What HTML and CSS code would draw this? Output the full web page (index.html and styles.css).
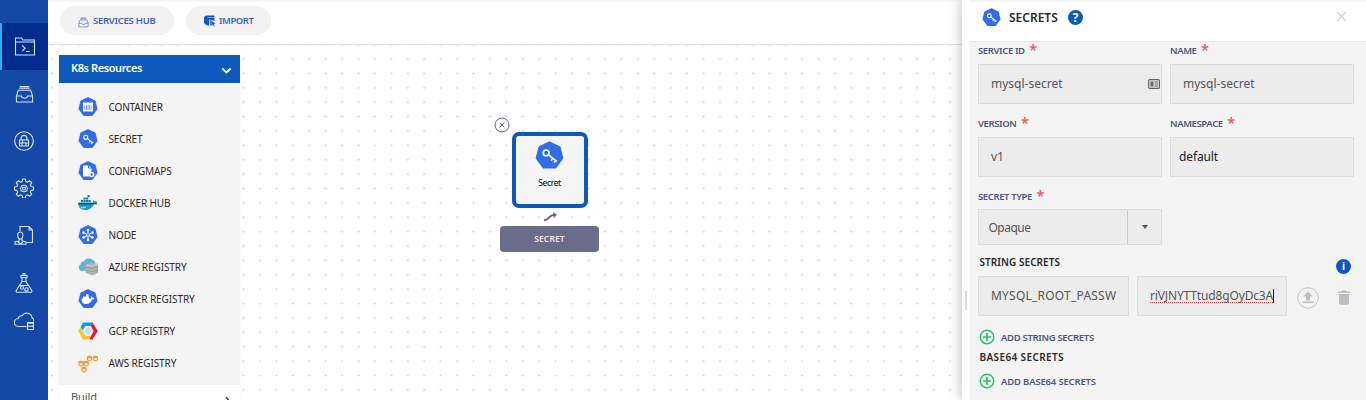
FILE: index.html
```html
<!DOCTYPE html>
<html lang="en">
<head>
<meta charset="utf-8">
<title>Secrets</title>
<link rel="stylesheet" href="styles.css">
</head>
<body>
<svg class="defs" width="0" height="0">
  <defs>
    <symbol id="hept" viewBox="0 0 20 20"><path d="M10 1l6.900 3.200 1.900 7.600-4.800 6.500H6L1.200 11.800l1.900-7.600z" fill="#326de6" stroke="#326de6" stroke-width="1.400" stroke-linejoin="round"/></symbol>
    <symbol id="key" viewBox="0 0 20 20"><use href="#hept"/><g fill="none" stroke="#fff" stroke-width="1.100"><circle cx="7.700" cy="8.200" r="2"/><path d="M9.300 9.500l5.800 4.600M12.300 11.900l-1.100 1.500M14.200 13.500L13.100 15"/></g></symbol>
    <symbol id="plus" viewBox="0 0 16 16"><g fill="none" stroke="#22c667" stroke-width="1.500"><circle cx="8" cy="8" r="6.800"/><path d="M8 4v8M4 8h8" stroke-width="1.700"/></g></symbol>
    <symbol id="tray" viewBox="0 0 20 20"><g fill="none" stroke="currentColor" stroke-width="1.100"><path d="M1.500 11.500l2-6h13l2 6v6.500h-17zM1.500 11.500h5.300c.2 3.200 6.200 3.200 6.400 0h5.300M4.500 3.500h11M5 1.700h10"/></g></symbol>
    <symbol id="chev" viewBox="0 0 10 10"><path d="M1.200 3.200L5 6.700l3.800-3.500" fill="none" stroke="currentColor" stroke-width="1.800"/></symbol>
  </defs>
</svg>
<div class="app">
  <nav class="side">
    <a class="nav"><svg viewBox="0 0 20 20"><path d="M.5 18V1h6l1.500 2H19.500v15zM.500 5h19M7 8.500l3.200 2.700L7.300 14M11 14.500h3.500"/></svg></a>
    <a class="nav"><svg class="tray" viewBox="0 0 20 20"><use href="#tray"/></svg></a>
    <a class="nav"><svg viewBox="0 0 20 20"><circle cx="10" cy="10" r="9.300"/><path d="M5.500 9h9v6h-9zM7.200 9V7.200a2.800 2.800 0 0 1 5.600 0V9M5.500 12h9M8.500 9v3M12 12v3M8 12v3"/></svg></a>
    <a class="nav"><svg viewBox="0 0 20 20"><path d="M8.600 1h2.800l.5 2.500 1.700.7 2.100-1.400 2 2-1.400 2.100.7 1.700 2.500.5v2.800l-2.500.5-.7 1.700 1.400 2.100-2 2-2.100-1.400-1.700.7-.5 2.500H8.600l-.5-2.500-1.700-.7-2.100 1.400-2-2 1.400-2.100-.7-1.700L.500 11.900V9.100L3 8.600l.7-1.700-1.400-2.100 2-2 2.100 1.400 1.700-.7z"/><circle cx="10" cy="10.500" r="3.300"/><circle cx="10" cy="10.500" r="1.500"/></svg></a>
    <a class="nav"><svg viewBox="0 0 20 20"><path d="M6 6V1.500h9L18.500 5v12.500H13M15 1.500V5h3.500M6.300 7a2.600 3 0 0 1 2.600 3c0 2.300-1 4-2.600 4s-2.600-1.700-2.600-4a2.600 3 0 0 1 2.600-3zM5 14v2l-4 1v2.300h11V17l-4-1v-2M4 17l2.300 2L9 17"/></svg></a>
    <a class="nav"><svg viewBox="0 0 20 20"><path d="M8 4.500v4L2.500 17c-.8 1.300-.2 2.300 1 2.300h13c1.200 0 1.800-1 1-2.300L12 8.500v-4M7 2.500h6v2H7zM9 .500h2v2H9zM5.500 12.500h9M8 8.500h4"/><circle cx="8" cy="14.800" r="1.500"/><circle cx="12.500" cy="16.400" r="1.700"/></svg></a>
    <a class="nav"><svg viewBox="0 0 20 20"><path d="M12.500 15.500h-8a4 4 0 0 1-.3-8 3.800 3.800 0 0 1 4-2.800 5.300 5.300 0 0 1 9.800 2 3.300 3.300 0 0 1 1.500 3.800M13.500 11.500h6v7h-6zM13.500 14.500c1 1 5 1 6 0M13.500 11.500c1 1 5 1 6 0"/></svg></a>
  </nav>

  <main class="work">
    <header class="bar">
      <button class="pill hub"><svg viewBox="0 0 20 20"><use href="#tray"/></svg><span>SERVICES HUB</span></button>
      <button class="pill imp"><svg viewBox="0 0 12 12"><path d="M2 .500h8.500V2H2.500v8L1.500 9.500 0 8V2zM3 2.500h7.500V6L8 5l.8 5.500H5.700V4.200H5v6.300H3z" fill="#0f5bb9"/><path d="M1.500 1.500h2v8h-2z" fill="#0f5bb9"/><path d="M7 5l5 4-2 .2 1 2-1.200.6-.9-2L7 11z" fill="#0f5bb9" stroke="#f3f2f2" stroke-width=".5"/></svg><span>IMPORT</span></button>
    </header>
    <section class="canvas">
      <svg class="dots" width="914" height="355">
        <defs>
          <pattern id="grid" x="187.300" y="6.900" width="16.430" height="14.380" patternUnits="userSpaceOnUse"><ellipse cx="8.200" cy="7.200" rx="1.200" ry=".9" fill="#dadada"/></pattern>
          <pattern id="edge" x="0" y="6.900" width="8" height="14.380" patternUnits="userSpaceOnUse"><ellipse cx="4" cy="7.200" rx="1.200" ry=".9" fill="#d6d6d6"/></pattern>
        </defs>
        <rect width="8" height="355" fill="url(#edge)"/>
        <rect x="11" width="903" height="355" fill="url(#grid)"/>
      </svg>

      <aside class="palette">
        <div class="head"><span>K8s Resources</span><svg viewBox="0 0 10 10"><use href="#chev"/></svg></div>
        <ul class="items">
          <li><svg viewBox="0 0 20 20"><use href="#hept"/><path d="M5 5.500h10v9H5zM6.500 8v4.500h7V8z" fill="#fff" fill-rule="evenodd"/><path d="M7.500 8v4.500M9.200 8v4.500M10.900 8v4.500M12.600 8v4.500" stroke="#fff"/></svg><span>CONTAINER</span></li>
          <li><svg viewBox="0 0 20 20"><use href="#key"/></svg><span>SECRET</span></li>
          <li><svg viewBox="0 0 20 20"><use href="#hept"/><path d="M5 4.500h5.500L13.500 7v3.500a3 3 0 0 0-2 5H5z" fill="#fff"/><path d="M10.500 4.500V7h3" fill="none" stroke="#326de6"/><circle cx="13.600" cy="13.600" r="2" fill="#326de6" stroke="#fff" stroke-width="1.500"/></svg><span>CONFIGMAPS</span></li>
          <li><svg viewBox="0 0 20 20"><path d="M.500 9.500h14.200c.5-1.200.3-2.300 0-3 .9.500 1.500 1.300 1.700 2 1-.4 2.200-.3 3.100.3-.8 1.200-2 1.600-3.300 1.600C14.500 14.800 11 17 7 17 2.500 17 .300 14 .500 9.500z" fill="#149bd2"/><path d="M3 7h2.200v2H3zM5.500 7h2.200v2H5.500zM5.500 4.500h2.200v2H5.500zM8 4.500h2.200v2H8zM8 7h2.200v2H8zM10.500 7h2.200v2h-2.200zM9.500 2h2.200v2.200H9.500z" fill="#0e7fae"/><path d="M0 10.700h19" stroke="#17425c" stroke-width="1.200"/><path d="M3 14.500c2 .5 4 .3 5-.5" stroke="#d8f1fb" fill="none"/></svg><span>DOCKER HUB</span></li>
          <li><svg viewBox="0 0 20 20"><use href="#hept"/><g stroke="#fff" stroke-width="1.100"><path d="M10 4.500v11M5.200 7.300l9.600 5.400M5.200 12.700l9.600-5.400"/></g><g fill="#fff"><circle cx="10" cy="5" r="1.200"/><circle cx="10" cy="15" r="1.200"/><circle cx="5.500" cy="7.500" r="1.200"/><circle cx="14.500" cy="12.500" r="1.200"/><circle cx="5.500" cy="12.500" r="1.200"/><circle cx="14.500" cy="7.500" r="1.200"/></g><circle cx="10" cy="10" r="1" fill="#326de6"/></svg><span>NODE</span></li>
          <li class="wide"><svg viewBox="0 0 20 20"><path d="M3 14a3.500 3.500 0 0 1-.3-6.500C2.500 5 4.500 4 6 4.500c1-3 6-4 8.500-1.500 2 .4 3 2 2.500 4v6z" fill="#5cb3d3"/><path d="M7.500 7.500L15 5.500l5 1.500v9l-5.500 2.500-7-2.500z" fill="#b3b3b3"/><path d="M7.500 10.200l6.500 1.300 6-1.500M7.500 13l6.500 1.800 6-1.800" fill="none" stroke="#929292" stroke-width=".9"/><path d="M8 8l6 1 6-2" fill="none" stroke="#d4d4d4" stroke-width=".7"/></svg><span>AZURE REGISTRY</span></li>
          <li class="wide"><svg viewBox="0 0 20 20"><use href="#hept"/><path d="M3.500 9.500h9.300c.4-.8.3-1.600 0-2.200.8.300 1.200.8 1.400 1.400.9-.2 1.700 0 2.300.5-.6.900-1.400 1.200-2.400 1.200-1.100 3.300-3.300 4.600-6 4.600-3 0-4.700-2-4.600-5.500zM5 7.500h6v2H5zM8 5.200h2.500v3H8z" fill="#fff"/></svg><span>DOCKER REGISTRY</span></li>
          <li class="wide"><svg viewBox="0 0 20 20"><path d="M2.700 6L0 10l5.200 8.500h7l2.500-3.500H9L6 10z" fill="#fcc52e"/><path d="M2.700 5.700L5.200 1.500h9.600L13 5.500 7.300 6 5 9.500z" fill="#00a4e4"/><path d="M14.500 1.500l5.300 8.500-5.300 8.500h-3L14.300 12l-1.500-7z" fill="#e8182f"/><path d="M7.300 5h5.400l3 5-3 5H7.300l-3-5z" fill="#e8eef3"/><path d="M8.500 7h3l1.700 3-1.700 3h-3l-1.700-3z" fill="#cbdce9"/></svg><span>GCP REGISTRY</span></li>
          <li class="wide"><svg viewBox="0 0 20 20"><g fill="#fff4e5" stroke="#f7942a" stroke-width="1.100"><path d="M1 9l2.100-.8L5.200 9v2.900l-2.100 1.200L1 11.900zM6.300 9l2-.8 2 .8v2.900l-2 1.200-2-1.200zM4 15l2-.8 2 .8v2.700L6 19l-2-1.300zM9.500 4l2-.8 2 .8v2.700l-2 1.200-2-1.200zM15.300 4l2-.8 2 .8v2.700l-2 1.200-2-1.200z"/><path d="M1 9l2.100 1 2.100-1M6.300 9l2 1 2-1M4 15l2 1 2-1M9.500 4l2 1 2-1M15.300 4l2 1 2-1" fill="none"/></g></svg><span>AWS REGISTRY</span></li>
        </ul>
        <div class="build"><span>Build</span><svg viewBox="0 0 10 10"><use href="#chev"/></svg></div>
      </aside>

      <div class="node">
        <svg class="remove" viewBox="0 0 16 16"><circle cx="8" cy="8" r="7" fill="#fff"/><path d="M5.700 5.700l4.600 4.600M10.300 5.700l-4.600 4.600"/></svg>
        <div class="card"><svg viewBox="0 0 20 20"><use href="#key"/></svg><span>Secret</span></div>
        <svg class="link" viewBox="0 0 14 10"><path d="M1 8.200c5 .3 5-5.400 10-5.200" fill="none" stroke="#696987" stroke-width="2.200"/><path d="M10 .200l4 2.500-3.200 3.300z" fill="#696987"/></svg>
        <div class="tag">SECRET</div>
      </div>
    </section>
  </main>

  <aside class="panel">
    <i class="grip"></i>
    <header class="phead">
      <svg class="pkey" viewBox="0 0 20 20"><use href="#key"/></svg>
      <h1>SECRETS</h1>
      <span class="help">?</span>
      <svg class="close" viewBox="0 0 12 12"><path d="M1 1l10 10M11 1L1 11"/></svg>
    </header>
    <div class="body">
      <div class="grid">
        <div class="field"><label>SERVICE ID<b>*</b></label><div class="input"><span>mysql-secret</span><svg class="contact" viewBox="0 0 12 10"><rect x=".600" y=".600" width="10.800" height="8.800" rx="1" fill="#e6e6e6" stroke="#666" stroke-width="1.200"/><path d="M2.500 2.500h3v5h-3z" fill="#666"/><path d="M6.500 3H10M6.500 5H10M6.500 7H10" stroke="#666"/></svg></div></div>
        <div class="field"><label>NAME<b>*</b></label><div class="input"><span>mysql-secret</span></div></div>
        <div class="field"><label>VERSION<b>*</b></label><div class="input"><span>v1</span></div></div>
        <div class="field"><label>NAMESPACE<b>*</b></label><div class="input dark"><span>default</span></div></div>
        <div class="field"><label>SECRET TYPE<b>*</b></label><div class="select"><span>Opaque</span><i></i></div></div>
      </div>
      <div class="title"><h2>STRING SECRETS</h2><span class="info">i</span></div>
      <div class="pair">
        <div class="input k"><span>MYSQL_ROOT_PASSW</span></div>
        <div class="input v"><span>riVJNYTTtud8gOyDc3A</span><i></i></div>
        <svg class="up" viewBox="0 0 22 22"><circle cx="11" cy="11" r="10.300" fill="none" stroke="#c2c2c2"/><path d="M11 4.500l5 5h-3v4H9v-4H6zM6 14.500h10V16H6z" fill="#bdbdbd"/></svg>
        <svg class="trash" viewBox="0 0 12 15"><path d="M0 1.500h3.500L4.500.300h3l1 1.200H12V3H0zM1 4h10v9q0 1.700-1.700 1.700H2.700Q1 14.700 1 13z" fill="#bdbdbd"/></svg>
      </div>
      <div class="add"><svg viewBox="0 0 16 16"><use href="#plus"/></svg><span>ADD STRING SECRETS</span></div>
      <h2 class="base">BASE64 SECRETS</h2>
      <div class="add b"><svg viewBox="0 0 16 16"><use href="#plus"/></svg><span>ADD BASE64 SECRETS</span></div>
    </div>
  </aside>
</div>
</body>
</html>
```
FILE: styles.css
```css
* { box-sizing: border-box; }
body { margin: 0; height: 400px; overflow: hidden; font-family: "Noto Sans", "Open Sans", sans-serif; font-size: 10px; color: #2a2a2a; }
svg { display: block; flex: none; }
span, label, h1, h2 { white-space: nowrap; }
.defs { position: absolute; }
.app { display: flex; height: 400px; background: #fff; }

.side { width: 48px; flex: none; background: #1448a7; padding-top: 23px; display: flex; flex-direction: column; }
.nav { height: 47px; flex: none; display: flex; align-items: center; justify-content: center; }
.nav:first-child { background: #002d8d; border-left: 2px solid #28b4f4; }
.nav svg { width: 20px; height: 20px; fill: none; stroke: #d9e4f8; stroke-width: 1.1; color: #d9e4f8; }
.nav svg.tray { width: 19px; height: 19px; margin-top: 2px; }
.nav:nth-child(6) { padding-top: 3px; }
.nav:last-child { height: 32px; }

.work { width: 914px; flex: none; }
.bar { height: 45px; padding: 6px 12px 9px; display: flex; gap: 12px; border-bottom: 1px solid #dedede; background: linear-gradient(#f3f3f3, #fff 3px); }
.pill { border: 0; border-radius: 15px; height: 29px; background: #f3f2f2; color: #3f65b3; font: 600 9.5px "Noto Sans", sans-serif; padding: 0; display: flex; align-items: center; }
.hub { width: 114px; padding-left: 18px; gap: 4px; letter-spacing: -.27px; }
.hub svg { width: 11px; height: 11px; margin-top: 4px; }
.imp { width: 85px; padding-left: 18px; gap: 3px; letter-spacing: -.45px; }
.imp svg { width: 12px; height: 12px; margin-top: 1px; }

.canvas { position: relative; height: 355px; padding: 10px 11px 0; overflow: hidden; }
.dots { position: absolute; left: 0; top: 0; }
.palette { position: relative; width: 181px; background: #f4f4f4; box-shadow: 0 0 5px rgba(0,0,0,.05); }
.head { height: 28px; background: #0d5abc; color: #fff; display: flex; align-items: center; justify-content: space-between; padding: 0 8px 3px 12px; font-size: 11px; font-weight: 600; letter-spacing: -.42px; }
.head svg { width: 11px; height: 11px; margin-top: 6px; }
.items { list-style: none; margin: 0; padding: 8px 0 6px 19px; }
.items li { height: 32px; display: flex; align-items: center; gap: 10.5px; letter-spacing: -.14px; }
.items li.wide { letter-spacing: -.08px; }
.items svg { width: 20px; height: 20px; }
.build { height: 40px; background: #fff; padding: 3px 8px 0 12px; display: flex; justify-content: space-between; font-size: 11px; line-height: 18px; color: #555; letter-spacing: -.1px; }
.build svg { width: 9px; height: 9px; margin-top: 8px; transform: rotate(-90deg); }

.node { position: absolute; left: 447px; top: 72px; width: 109px; height: 136px; display: flex; flex-direction: column; align-items: center; }
.remove { position: absolute; left: -1px; top: 0; width: 16px; height: 16px; fill: none; stroke: #66668c; stroke-width: 1; }
.card { margin-top: 15px; width: 76px; height: 76px; border: 4px solid #0d5abc; border-radius: 7px; background: #f5f5f5; display: flex; flex-direction: column; align-items: center; padding-top: 5px; color: #000; font-size: 8.5px; letter-spacing: -.35px; }
.card svg { width: 29px; height: 29px; }
.card span { margin-top: 7px; }
.link { width: 14px; height: 10px; margin-top: 4px; }
.tag { width: 99px; height: 26px; flex: none; margin-top: 4px; border-radius: 4px; background: #6b6b8c; color: #f3e6e6; display: flex; align-items: center; justify-content: center; font-weight: 600; font-size: 8.5px; padding-bottom: 1px; letter-spacing: .1px; }

.panel { position: relative; width: 404px; flex: none; background: #fff; padding-left: 8px; box-shadow: -2px 0 10px rgba(0,0,0,.22); }
.grip { position: absolute; left: 3px; top: 291px; width: 2px; height: 19px; background: #ddd; }
.phead { height: 41px; display: flex; align-items: center; padding: 0 19px 7px 12px; background: linear-gradient(#f3f3f3, #fff 3px); }
.pkey { width: 19px; height: 19px; }
h1 { margin: 2px 0 0 8px; font-size: 12px; font-weight: 600; line-height: 16px; letter-spacing: 0; width: 51px; }
.help { width: 15px; height: 15px; border-radius: 50%; margin-left: 8px; background: #0d5abc; color: #fff; font-size: 12.5px; font-weight: 700; line-height: 15px; text-align: center; }
.close { width: 11px; height: 11px; margin: -2px 0 0 auto; stroke: #ccc; stroke-width: 1.3; fill: none; }
.body { height: 359px; background: #f4f4f4; border-top: 1px solid #e6e6e6; padding: 0 12px 0 8px; }
.grid { display: grid; grid-template-columns: 184px 184px; column-gap: 8px; }
.field { height: 73px; }
label { display: flex; height: 22px; align-items: flex-start; line-height: 17px; font-size: 9.5px; font-weight: 600; letter-spacing: -.38px; color: #4a5880; gap: 4.5px; }
label b { color: #f25050; font-size: 14.5px; font-weight: 500; line-height: 15px; }
.input { position: relative; height: 40px; border: 1px solid #ddd; background: #ececec; display: flex; align-items: center; padding: 0 0 1px 12px; color: #555; font-size: 12px; }
.dark { color: #222; padding-left: 8px; }
.dark span { letter-spacing: -.12px; }
.contact { width: 12px; height: 10px; margin: 0 1px 0 auto; }
.select { height: 36px; margin-top: -1px; border: 1px solid #ddd; background: #ececec; color: #555; font-size: 12px; padding-left: 9.5px; display: flex; align-items: center; justify-content: space-between; }
.select span { letter-spacing: -.5px; }
.select i { width: 34px; height: 34px; border-left: 1px solid #c9c9c9; display: flex; align-items: center; justify-content: center; }
.select i::before { content: ""; border: 3.5px solid transparent; border-top: 4px solid #555; border-bottom: 0; }
h2 { margin: 0; font-size: 10px; font-weight: 600; line-height: 14px; color: #2a2a2a; }
.title { margin-top: -6px; height: 22px; display: flex; justify-content: space-between; align-items: flex-start; padding: 0 3px 0 1.5px; }
.title h2 { line-height: 14px; letter-spacing: .05px; }
.info { width: 15px; height: 15px; border-radius: 50%; margin-top: 4px; background: #0d5abc; color: #fff; font-size: 10px; line-height: 15px; font-weight: 700; text-align: center; }
.pair { height: 40px; margin-top: -1px; display: flex; align-items: center; }
.k { width: 151px; }
.k span { letter-spacing: .22px; }
.v { width: 150px; margin-left: 8px; }
.v span { text-decoration: underline dotted #e83b3b 1.4px; text-underline-offset: 1.5px; text-decoration-skip-ink: none; letter-spacing: -.15px; }
.v i { width: 1px; height: 14px; background: #222; }
.up { width: 22px; height: 22px; margin: 4px 0 0 10px; }
.trash { width: 12px; height: 15px; margin: 3px 0 0 19px; }
.add { height: 16px; margin-top: 13px; display: flex; align-items: center; gap: 6px; padding-left: 1px; font-size: 9.5px; font-weight: 600; color: #4a5880; letter-spacing: -.32px; }
.add svg { width: 16px; height: 16px; }
.base { margin: 5px 0 0 1.5px; letter-spacing: .38px; }
.b { margin-top: 9px; letter-spacing: -.17px; }
```
